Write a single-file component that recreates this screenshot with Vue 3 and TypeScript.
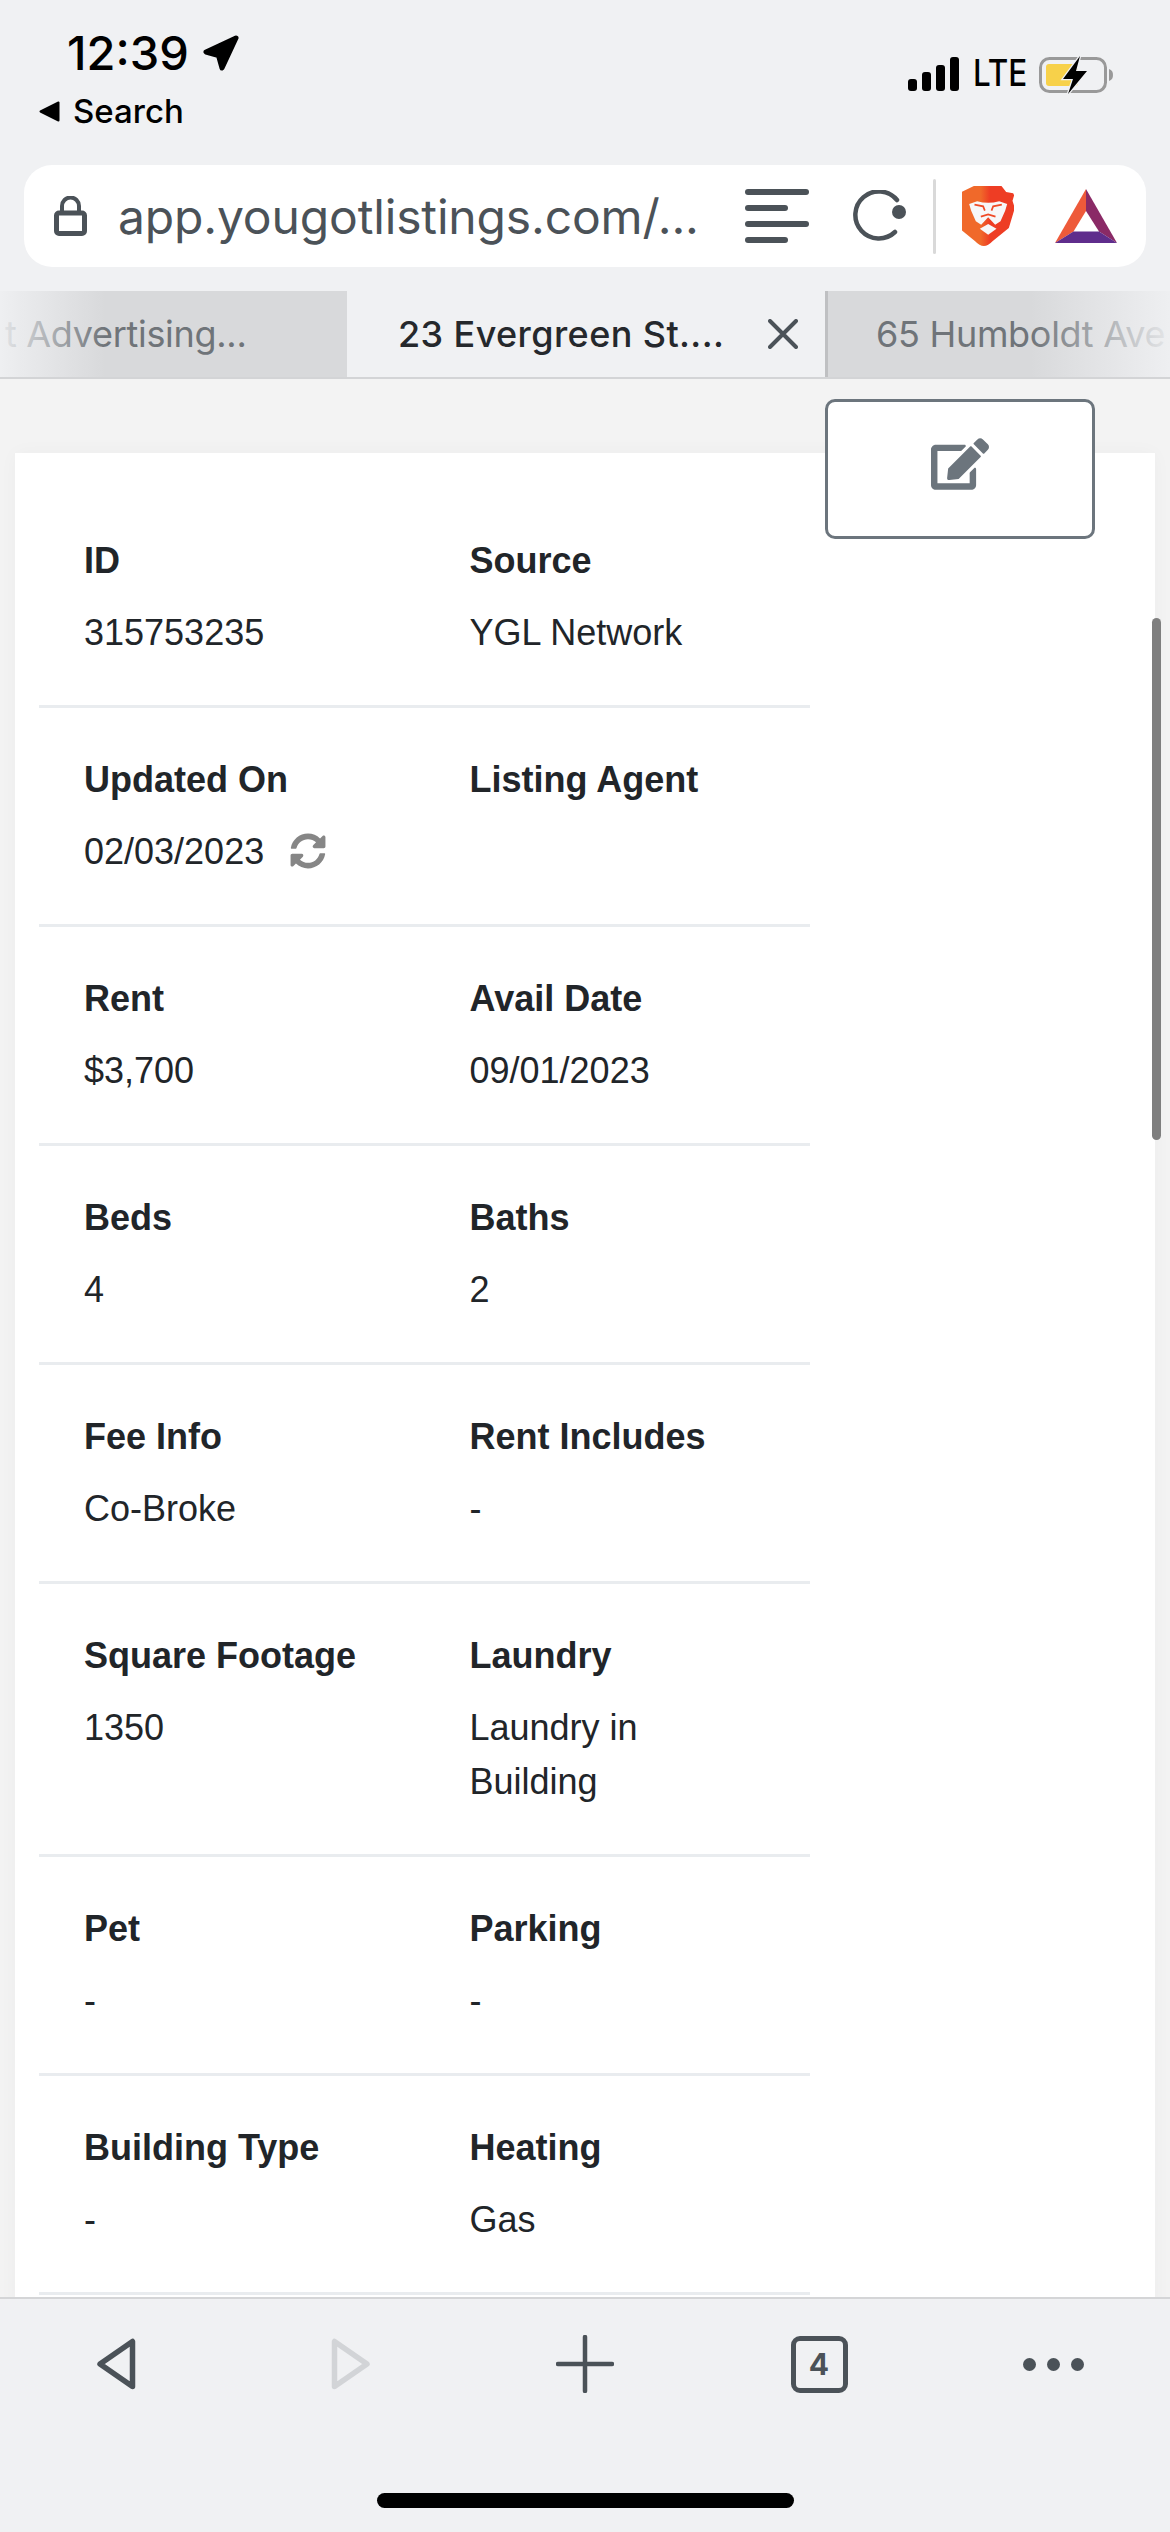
<script setup lang="ts">
interface Field {
  label: string
  value: string
  sync?: boolean
}

const rows: Field[][] = [
  [{ label: 'ID', value: '315753235' }, { label: 'Source', value: 'YGL Network' }],
  [{ label: 'Updated On', value: '02/03/2023', sync: true }, { label: 'Listing Agent', value: '' }],
  [{ label: 'Rent', value: '$3,700' }, { label: 'Avail Date', value: '09/01/2023' }],
  [{ label: 'Beds', value: '4' }, { label: 'Baths', value: '2' }],
  [{ label: 'Fee Info', value: 'Co-Broke' }, { label: 'Rent Includes', value: '-' }],
  [{ label: 'Square Footage', value: '1350' }, { label: 'Laundry', value: 'Laundry in Building' }],
  [{ label: 'Pet', value: '-' }, { label: 'Parking', value: '-' }],
  [{ label: 'Building Type', value: '-' }, { label: 'Heating', value: 'Gas' }],
]
</script>

<template>
  <div class="screen">
    <header class="status">
      <div class="status__left">
        <div class="status__time">
          <span>12:39</span>
          <svg class="status__arrow" viewBox="0 0 36 36" aria-hidden="true">
            <path d="M33 3 3 17 15.500 20.500 19 33Z" fill="#000" stroke="#000" stroke-width="5" stroke-linejoin="round" />
          </svg>
        </div>
        <div class="status__back">
          <svg class="status__caret" viewBox="0 0 21 21" aria-hidden="true">
            <path d="M19.500 1.500v18L1.500 10.500Z" fill="#000" stroke="#000" stroke-width="2" stroke-linejoin="round" />
          </svg>
          <span>Search</span>
        </div>
      </div>
      <div class="status__right">
        <div class="signal">
          <i style="height: 12px"></i>
          <i style="height: 19px"></i>
          <i style="height: 26px"></i>
          <i style="height: 34px"></i>
        </div>
        <span class="status__lte">LTE</span>
        <svg class="battery" viewBox="0 0 76 40" aria-hidden="true">
          <rect x="1.500" y="3.500" width="65" height="33" rx="9" fill="none" stroke="#999" stroke-width="3" />
          <path d="M70 14c3 1 4 3 4 6s-1 5-4 6Z" fill="#999" />
          <rect x="7" y="9" width="32" height="22" rx="3" fill="#f7d14a" />
          <path d="M41 1 24 24h10l-5 15 19-23H37Z" fill="#000" stroke="#f0f1f3" stroke-width="2.500" paint-order="stroke" />
        </svg>
      </div>
    </header>

    <div class="address">
      <svg class="address__lock" viewBox="0 0 33 40" aria-hidden="true">
        <path d="M8 17V10a8.500 8.500 0 0 1 17 0v7" fill="none" stroke="#4b5258" stroke-width="4" />
        <rect x="2.500" y="17" width="28" height="20.500" rx="2.500" fill="none" stroke="#4b5258" stroke-width="5" />
      </svg>
      <span class="address__url">app.yougotlistings.com/...</span>
      <svg class="address__list" viewBox="0 0 64 54" aria-hidden="true">
        <g stroke="#4b5258" stroke-width="6" stroke-linecap="round">
          <path d="M3 3h58" />
          <path d="M3 19h37" />
          <path d="M3 35h58" />
          <path d="M3 51h37" />
        </g>
      </svg>
      <svg class="address__reload" viewBox="0 0 54 52" aria-hidden="true">
        <path d="M44 10A23.500 23.500 0 1 0 42 42" fill="none" stroke="#4b5258" stroke-width="4.500" stroke-linecap="round" />
        <circle cx="46" cy="22" r="7" fill="#4b5258" />
      </svg>
      <span class="address__divider"></span>
      <svg class="address__brave" viewBox="187 78 155 180" aria-hidden="true">
        <defs>
          <linearGradient id="brave-fill" x1="0" y1="0" x2="1" y2="0">
            <stop offset="0.45" stop-color="#f0692a" />
            <stop offset="0.6" stop-color="#ee3d24" />
          </linearGradient>
        </defs>
        <path
          d="M222 78h83l14 18 21 4 3 6-5 16 7 22-18 60-49 40q-13 14-26 14t-26-14l-49-40-18-60 7-22-5-16 3-6 21-4Z"
          fill="url(#brave-fill)"
        />
        <path
          d="M208 132 232 124Q265 133 298 124L322 132 316 152 302 184 286 194 265 172 244 194 228 184 214 152Z"
          fill="#f7f7f8"
        />
        <path
          d="M224 134 250 139 255 152M306 134 280 139 275 152M243 170 265 163 287 170"
          fill="none"
          stroke="#ef4a26"
          stroke-width="5"
        />
        <path d="M240 206 265 192 290 206 265 224Z" fill="#f7f7f8" />
      </svg>
      <svg class="address__bat" viewBox="0 0 62 54" aria-hidden="true">
        <path d="M31 0 0 54 18.500 42.500 31 22Z" fill="#ee5a3a" />
        <path d="M31 0 62 54 44 42.500 31 22Z" fill="#8a2a66" />
        <path d="M0 54H62L44 42.500H18.500Z" fill="#5f2d8c" />
      </svg>
    </div>

    <nav class="tabs">
      <div class="tab tab--left"><span>t Advertising...</span></div>
      <div class="tab tab--active">
        <span>23 Evergreen St....</span>
        <svg class="tab__close" viewBox="0 0 30 30" aria-hidden="true">
          <path d="M2 2 28 28M28 2 2 28" stroke="#4b5258" stroke-width="4" stroke-linecap="round" />
        </svg>
      </div>
      <div class="tab tab--right"><span>65 Humboldt Ave</span></div>
    </nav>

    <main class="page">
      <section class="card">
        <div v-for="(row, i) in rows" :key="i" class="row">
          <div v-for="field in row" :key="field.label" class="field">
            <div class="field__label">{{ field.label }}</div>
            <div class="field__value">
              {{ field.value }}
              <svg v-if="field.sync" class="field__sync" viewBox="0 0 512 512" aria-hidden="true">
                <path
                  fill="#868686"
                  d="M370.72 133.28C339.458 104.008 298.888 87.962 255.848 88c-77.458.068-144.328 53.178-162.791 126.85-1.344 5.363-6.122 9.15-11.651 9.15H24.103c-7.498 0-13.194-6.807-11.807-14.176C33.933 94.924 134.813 8 256 8c66.448 0 126.791 26.136 171.315 68.685L463.03 40.97C478.149 25.851 504 36.559 504 57.941V192c0 13.255-10.745 24-24 24H345.941c-21.382 0-32.09-25.851-16.971-40.971l41.75-41.749zM32 296h134.059c21.382 0 32.09 25.851 16.971 40.971l-41.75 41.75c31.262 29.273 71.835 45.319 114.876 45.28 77.418-.07 144.315-53.144 162.787-126.849 1.344-5.363 6.122-9.15 11.651-9.15h57.304c7.498 0 13.194 6.807 11.807 14.176C478.067 417.076 377.187 504 256 504c-66.448 0-126.791-26.136-171.315-68.685L48.97 471.03C33.851 486.149 8 475.441 8 454.059V320c0-13.255 10.745-24 24-24z"
                />
              </svg>
            </div>
          </div>
        </div>
      </section>

      <button class="edit" type="button" aria-label="Edit">
        <svg class="edit__icon" viewBox="0 0 576 512" aria-hidden="true">
          <path
            fill="#6c757d"
            d="M402.6 83.2l90.2 90.2c3.800 3.800 3.800 10 0 13.800L274.400 405.600l-92.800 10.300c-12.400 1.400-22.900-9.100-21.500-21.500l10.300-92.800L388.800 83.200c3.800-3.800 10-3.800 13.800 0zm162-22.900l-48.800-48.800c-15.200-15.200-39.900-15.200-55.200 0l-35.400 35.400c-3.800 3.800-3.800 10 0 13.800l90.200 90.200c3.800 3.800 10 3.800 13.800 0l35.400-35.400c15.200-15.300 15.200-40 0-55.200zM384 346.200V448H64V128h229.800c3.200 0 6.200-1.300 8.500-3.500l40-40c7.600-7.600 2.200-20.500-8.500-20.500H48C21.500 64 0 85.500 0 112v352c0 26.500 21.500 48 48 48h352c26.500 0 48-21.500 48-48V306.200c0-10.700-12.900-16-20.500-8.500l-40 40c-2.200 2.300-3.500 5.300-3.500 8.500z"
          />
        </svg>
      </button>
      <span class="scrollbar"></span>
    </main>

    <footer class="toolbar">
      <div class="toolbar__icons">
        <div class="toolbar__item">
          <svg class="toolbar__tri" viewBox="0 0 40 52" aria-hidden="true">
            <path d="M35.500 3.500V48.500L3 26Z" fill="none" stroke="#4b5258" stroke-width="5.500" stroke-linejoin="round" />
          </svg>
        </div>
        <div class="toolbar__item">
          <svg class="toolbar__tri" viewBox="0 0 40 52" aria-hidden="true">
            <path d="M3.500 3.500V48.500L36 26Z" fill="none" stroke="#d2d4d7" stroke-width="5.500" stroke-linejoin="round" />
          </svg>
        </div>
        <div class="toolbar__item">
          <svg class="toolbar__plus" viewBox="0 0 58 58" aria-hidden="true">
            <path d="M29 2V56M2 29H56" stroke="#4b5258" stroke-width="4.500" stroke-linecap="round" />
          </svg>
        </div>
        <div class="toolbar__item">
          <span class="toolbar__count">4</span>
        </div>
        <div class="toolbar__item toolbar__dots">
          <i></i><i></i><i></i>
        </div>
      </div>
      <span class="toolbar__home"></span>
    </footer>
  </div>
</template>

<style>
html,
body {
  margin: 0;
  background: #f0f1f3;
}
</style>

<style scoped>
.screen {
  width: 1170px;
  height: 2532px;
  display: flex;
  flex-direction: column;
  overflow: hidden;
  background: #f0f1f3;
  font-family: Inter, "Liberation Sans", sans-serif;
  color: #212529;
}

.status {
  height: 165px;
  box-sizing: border-box;
  display: flex;
  justify-content: space-between;
  padding: 28px 55px 0 39px;
  color: #000;
}

.status__time {
  display: flex;
  align-items: center;
  gap: 14px;
  margin-left: 28px;
  height: 50px;
  font-size: 47px;
  font-weight: 500;
  line-height: 50px;
}

.status__arrow {
  width: 36px;
  height: 36px;
}

.status__back {
  display: flex;
  align-items: center;
  gap: 13px;
  margin-top: 11px;
  height: 44px;
  font-size: 33px;
  font-weight: 500;
  line-height: 44px;
}

.status__caret {
  width: 21px;
  height: 21px;
}

.status__right {
  display: flex;
  align-items: flex-start;
  padding-top: 27px;
}

.signal {
  display: flex;
  align-items: flex-end;
  gap: 5px;
  height: 34px;
  margin-top: 2px;
}

.signal i {
  width: 9px;
  border-radius: 3px;
  background: #000;
}

.status__lte {
  width: 52px;
  margin: 0 14px;
  font-size: 37px;
  font-weight: 500;
  line-height: 36px;
  transform: scaleX(0.85);
  transform-origin: left center;
  white-space: nowrap;
}

.battery {
  width: 76px;
  height: 40px;
}

.address {
  height: 102px;
  margin: 0 24px;
  display: flex;
  align-items: center;
  padding: 0 29px 0 30px;
  border-radius: 28px;
  background: #fff;
}

.address__lock {
  width: 33px;
  height: 40px;
  flex: none;
}

.address__url {
  flex: 1;
  margin-left: 31px;
  font-size: 48px;
  letter-spacing: -0.15px;
  color: #4b5258;
  white-space: nowrap;
}

.address__list {
  width: 64px;
  height: 54px;
  flex: none;
}

.address__reload {
  width: 54px;
  height: 52px;
  margin-left: 44px;
  flex: none;
}

.address__divider {
  width: 3px;
  height: 75px;
  margin-left: 26px;
  border-radius: 2px;
  background: #d9d9d9;
  flex: none;
}

.address__brave {
  width: 52px;
  height: 60px;
  margin-left: 26px;
  flex: none;
}

.address__bat {
  width: 62px;
  height: 54px;
  margin-left: 41px;
  flex: none;
}

.tabs {
  display: flex;
  height: 88px;
  margin-top: 24px;
  box-sizing: border-box;
  border-bottom: 2px solid #d3d4d6;
  font-size: 36px;
  letter-spacing: -0.3px;
}

.tab {
  position: relative;
  display: flex;
  align-items: center;
  white-space: nowrap;
  overflow: hidden;
}

.tab--left {
  width: 347px;
  flex: none;
  padding-left: 5px;
  box-sizing: border-box;
  background: #d8d9db;
  color: #6f7479;
}

.tab--left::after {
  content: "";
  position: absolute;
  inset: 0 auto 0 0;
  width: 105px;
  background: linear-gradient(to right, rgba(240, 241, 243, 0.92), rgba(216, 217, 219, 0));
}

.tab--active {
  width: 478px;
  flex: none;
  box-sizing: border-box;
  justify-content: space-between;
  padding: 0 27px 0 51px;
  font-weight: 500;
  letter-spacing: 0.4px;
  color: #25282c;
}

.tab__close {
  width: 30px;
  height: 30px;
}

.tab--right {
  flex: 1;
  padding-left: 48px;
  border-left: 3px solid #bfc0c2;
  background: #d8d9db;
  color: #6f7479;
}

.tab--right::after {
  content: "";
  position: absolute;
  inset: 0 0 0 auto;
  width: 140px;
  background: linear-gradient(to left, rgba(240, 241, 243, 0.92), rgba(216, 217, 219, 0));
}

.page {
  position: relative;
  flex: 1;
  min-height: 0;
  overflow: hidden;
  padding: 74px 15px 0;
  background: #f3f3f3;
}

.card {
  height: 2000px;
  padding: 81px 0 0 24px;
  box-sizing: border-box;
  background: #fff;
  box-shadow: 0 0 18px rgba(0, 0, 0, 0.03);
  font-family: "Liberation Sans", Arial, sans-serif;
}

.row {
  display: grid;
  grid-template-columns: 1fr 1fr;
  width: 771px;
  padding-bottom: 45px;
  margin-bottom: 45px;
  border-bottom: 3px solid #e9ecef;
}

.field {
  padding-left: 45px;
  padding-right: 60px;
  font-size: 36px;
  line-height: 54px;
}

.field__label {
  margin-bottom: 18px;
  font-weight: 700;
  white-space: nowrap;
}

.field__value {
  min-height: 54px;
}

.field__sync {
  width: 36px;
  height: 36px;
  margin-left: 16px;
  vertical-align: -5px;
}

.edit {
  position: absolute;
  left: 825px;
  top: 20px;
  width: 270px;
  height: 140px;
  padding: 0 0 10px;
  display: flex;
  align-items: center;
  justify-content: center;
  background: #fff;
  border: 3px solid #6c757d;
  border-radius: 10px;
}

.edit__icon {
  width: 58px;
  height: 52px;
}

.scrollbar {
  position: absolute;
  top: 239px;
  left: 1152px;
  width: 9px;
  height: 522px;
  border-radius: 5px;
  background: #7f7f7f;
}

.toolbar {
  height: 235px;
  flex: none;
  box-sizing: border-box;
  display: flex;
  flex-direction: column;
  align-items: center;
  border-top: 2px solid #d4d5d7;
  background: #f0f1f3;
}

.toolbar__icons {
  width: 100%;
  display: flex;
  height: 130px;
}

.toolbar__item {
  flex: 1;
  display: flex;
  align-items: center;
  justify-content: center;
}

.toolbar__tri {
  width: 40px;
  height: 52px;
}

.toolbar__plus {
  width: 58px;
  height: 58px;
}

.toolbar__count {
  width: 57px;
  height: 57px;
  box-sizing: border-box;
  display: flex;
  align-items: center;
  justify-content: center;
  border: 5px solid #4b5258;
  border-radius: 9px;
  font-size: 30px;
  font-weight: 700;
  color: #4b5258;
}

.toolbar__dots {
  gap: 11px;
}

.toolbar__dots i {
  width: 13px;
  height: 13px;
  border-radius: 50%;
  background: #4b5258;
}

.toolbar__home {
  width: 417px;
  height: 15px;
  margin-top: 64px;
  border-radius: 8px;
  background: #000;
}
</style>
